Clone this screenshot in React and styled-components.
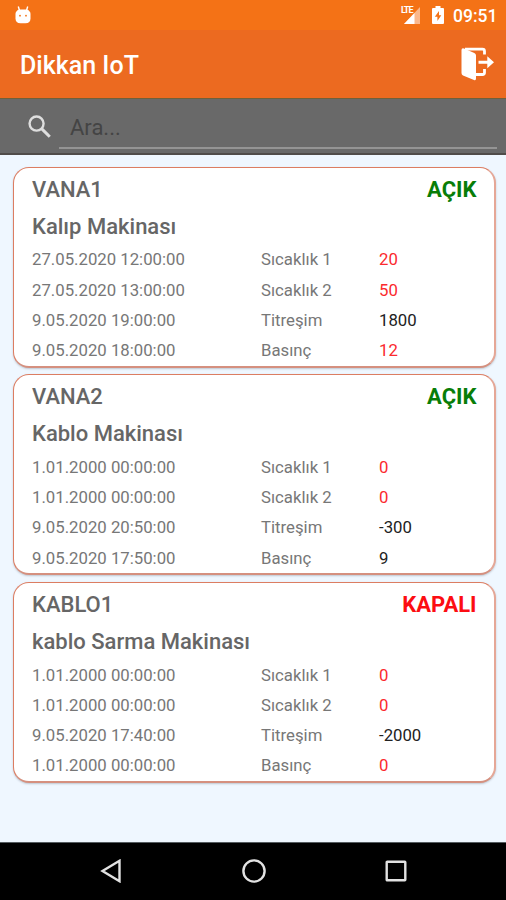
import React from "react";
import styled, { createGlobalStyle } from "styled-components";

const machines = [
  {
    code: "VANA1",
    name: "Kalıp Makinası",
    open: true,
    readings: [
      { date: "27.05.2020 12:00:00", label: "Sıcaklık 1", value: "20", alert: true },
      { date: "27.05.2020 13:00:00", label: "Sıcaklık 2", value: "50", alert: true },
      { date: "9.05.2020 19:00:00", label: "Titreşim", value: "1800" },
      { date: "9.05.2020 18:00:00", label: "Basınç", value: "12", alert: true },
    ],
  },
  {
    code: "VANA2",
    name: "Kablo Makinası",
    open: true,
    readings: [
      { date: "1.01.2000 00:00:00", label: "Sıcaklık 1", value: "0", alert: true },
      { date: "1.01.2000 00:00:00", label: "Sıcaklık 2", value: "0", alert: true },
      { date: "9.05.2020 20:50:00", label: "Titreşim", value: "-300" },
      { date: "9.05.2020 17:50:00", label: "Basınç", value: "9" },
    ],
  },
  {
    code: "KABLO1",
    name: "kablo Sarma Makinası",
    open: false,
    readings: [
      { date: "1.01.2000 00:00:00", label: "Sıcaklık 1", value: "0", alert: true },
      { date: "1.01.2000 00:00:00", label: "Sıcaklık 2", value: "0", alert: true },
      { date: "9.05.2020 17:40:00", label: "Titreşim", value: "-2000" },
      { date: "1.01.2000 00:00:00", label: "Basınç", value: "0", alert: true },
    ],
  },
];

const BugIcon = () => (
  <svg width="16" height="18" viewBox="0 0 16 18">
    <path d="M3.3 0.500l1.200 4M12.700 0.500l-1.200 4" stroke="#fff" strokeWidth="1.400" />
    <path
      d="M4 3.500h8q3.500 1.500 3.500 4.500v4.500q0 4.500-5 4.800h-5Q.5 17 .5 12.500V8Q.5 5 4 3.500z"
      fill="#fff"
    />
    <circle cx="5" cy="9.700" r="0.900" fill="#f47216" />
    <circle cx="11" cy="9.700" r="0.900" fill="#f47216" />
  </svg>
);

const SignalIcon = () => (
  <svg width="20" height="18" viewBox="0 0 20 18">
    <path d="M19 1v17H3z" fill="#fab88b" />
    <path d="M3 18h10.500V7z" fill="#fff" />
  </svg>
);

const BatteryIcon = () => (
  <svg width="12" height="18" viewBox="0 0 12 18">
    <path
      d="M3.500 0h5v2H11a1 1 0 0 1 1 1v14a1 1 0 0 1-1 1H1a1 1 0 0 1-1-1V3a1 1 0 0 1 1-1h2.500z"
      fill="#fff"
    />
    <path d="M7 5L2.800 10.800h2.600V15l3.900-5.800H7z" fill="#f47216" />
  </svg>
);

const LogoutIcon = () => (
  <svg width="33" height="34" viewBox="0 0 33 34">
    <path
      d="M4 2.200h17.500q2 0 2 2V7.500M23.500 22v3.500q0 2-2 2h-7"
      fill="none"
      stroke="#fff"
      strokeWidth="2.800"
    />
    <path
      d="M0.500 3Q.5.800 3 1.500L13.300 6Q15 6.800 15 8.500V31.500Q15 34 13 33L2 28.500Q.5 27.800.5 26z"
      fill="#fff"
    />
    <path d="M17.500 13.700h8.800V9.300l6.700 6-6.700 6v-4.600h-8.800z" fill="#fff" />
  </svg>
);

const SearchIcon = () => (
  <svg width="23" height="23" viewBox="0 0 22 22" fill="none" stroke="#dedede">
    <circle cx="8.200" cy="8.200" r="6.700" strokeWidth="2.300" />
    <path d="M13 13l7.800 7.800" strokeWidth="2.900" />
  </svg>
);

const App = () => {
  return (
    <>
      <GlobalStyle />
      <Screen>
        <StatusBar>
          <BugIcon />
          <StatusIcons>
            <Network>
              <SignalIcon />
              <Lte>LTE</Lte>
            </Network>
            <BatteryIcon />
            <Clock>09:51</Clock>
          </StatusIcons>
        </StatusBar>
        <AppBar>
          <Title>Dikkan IoT</Title>
          <LogoutIcon />
        </AppBar>
        <SearchBar>
          <SearchIcon />
          <SearchInput placeholder="Ara..." />
        </SearchBar>
        <List>
          {machines.map((machine) => (
            <Card key={machine.code}>
              <CardHeader>
                <Heading>{machine.code}</Heading>
                <Status $open={machine.open}>
                  {machine.open ? "AÇIK" : "KAPALI"}
                </Status>
              </CardHeader>
              <Heading>{machine.name}</Heading>
              <Readings>
                {machine.readings.map((reading) => (
                  <Reading key={reading.label}>
                    <span>{reading.date}</span>
                    <span>{reading.label}</span>
                    <Value $alert={reading.alert}>{reading.value}</Value>
                  </Reading>
                ))}
              </Readings>
            </Card>
          ))}
        </List>
        <NavBar>
          <svg width="24" height="24" viewBox="0 0 24 24">
            <path d="M20.500 1.800v20.400L3.500 12z" />
          </svg>
          <svg width="26" height="26" viewBox="0 0 26 26">
            <circle cx="13" cy="13" r="10.600" />
          </svg>
          <svg width="24" height="24" viewBox="0 0 24 24">
            <rect x="2.700" y="2.700" width="18.600" height="18.600" rx="0.500" />
          </svg>
        </NavBar>
      </Screen>
    </>
  );
};

const GlobalStyle = createGlobalStyle`
  * {
    box-sizing: border-box;
  }
  body {
    margin: 0;
    font-family: Roboto, sans-serif;
  }
`;

const Screen = styled.div`
  display: flex;
  flex-direction: column;
  height: 900px;
  background: #eff7ff;
  overflow: hidden;
`;

const StatusBar = styled.header`
  display: flex;
  justify-content: space-between;
  align-items: center;
  height: 30px;
  padding: 0 10px 0 15px;
  background: #f47216;
`;

const StatusIcons = styled.div`
  display: flex;
  align-items: center;
`;

const Network = styled.div`
  position: relative;
  display: flex;
  margin: 0 11px 0 0;
`;

const Lte = styled.span`
  position: absolute;
  top: 0;
  left: 0;
  color: #fff;
  font-size: 9px;
  font-weight: 700;
  line-height: 8px;
  letter-spacing: -1px;
`;

const Clock = styled.span`
  width: 43px;
  margin-left: 9px;
  color: #fff;
  font-size: 17.5px;
  font-weight: 500;
  line-height: 30px;
  padding-top: 1px;
`;

const AppBar = styled.div`
  display: flex;
  justify-content: space-between;
  align-items: center;
  height: 68px;
  padding: 0 12px 0 20px;
  background: #ec6a20;
`;

const Title = styled.h1`
  margin: 3px 0 0;
  color: #fff;
  font-size: 25px;
  font-weight: 500;
`;

const SearchBar = styled.div`
  display: flex;
  align-items: center;
  height: 57px;
  padding: 0 9px 0 28px;
  gap: 8px;
  background: #696969;
  border-top: 1px solid #70603a;
  border-bottom: 2px solid #504c4a;
`;

const SearchInput = styled.input`
  flex: 1;
  align-self: flex-end;
  height: 46px;
  margin-bottom: 4px;
  padding: 4px 0 0 11px;
  border: 0;
  border-bottom: 2px solid #949494;
  outline: 0;
  background: transparent;
  font-family: inherit;
  font-size: 22px;
  &::placeholder {
    color: #444;
    opacity: 1;
  }
`;

const List = styled.main`
  flex: 1;
  display: flex;
  flex-direction: column;
  gap: 6.700px;
  padding: 11.500px 10.500px 0 13px;
`;

const Card = styled.section`
  height: 201px;
  padding: 3px 17px 0 18px;
  border: 1.500px solid #dc7d62;
  border-right: 2px solid #e5a797;
  border-bottom: 2px solid #d5907f;
  border-radius: 16px;
  background: #fff;
  box-shadow: 0 1px 2px rgba(80, 90, 100, 0.3);
`;

const CardHeader = styled.div`
  display: flex;
  justify-content: space-between;
`;

const Heading = styled.h2`
  margin: 0;
  color: #666;
  font-size: 22px;
  font-weight: 500;
  line-height: 37px;
`;

const Status = styled.span`
  color: ${({ $open }) => ($open ? "#087d08" : "#fc0d12")};
  font-size: 22px;
  font-weight: 700;
  line-height: 37px;
`;

const Readings = styled.div`
  display: grid;
  margin-top: -0.300px;
`;

const Reading = styled.div`
  display: grid;
  grid-template-columns: 229px 118px 1fr;
  height: 30.300px;
  color: #777;
  font-size: 16.750px;
  line-height: 30px;
`;

const Value = styled.span`
  color: ${({ $alert }) => ($alert ? "#fb2a2e" : "#222")};
`;

const NavBar = styled.nav`
  display: flex;
  align-items: center;
  justify-content: space-between;
  height: 58px;
  padding: 0 98px 0 99px;
  background: #000;
  border-top: 1px solid #555c60;
  svg {
    position: relative;
    top: -1px;
    fill: none;
    stroke: #e2e2e2;
    stroke-width: 2.400;
  }
`;

export default App;
